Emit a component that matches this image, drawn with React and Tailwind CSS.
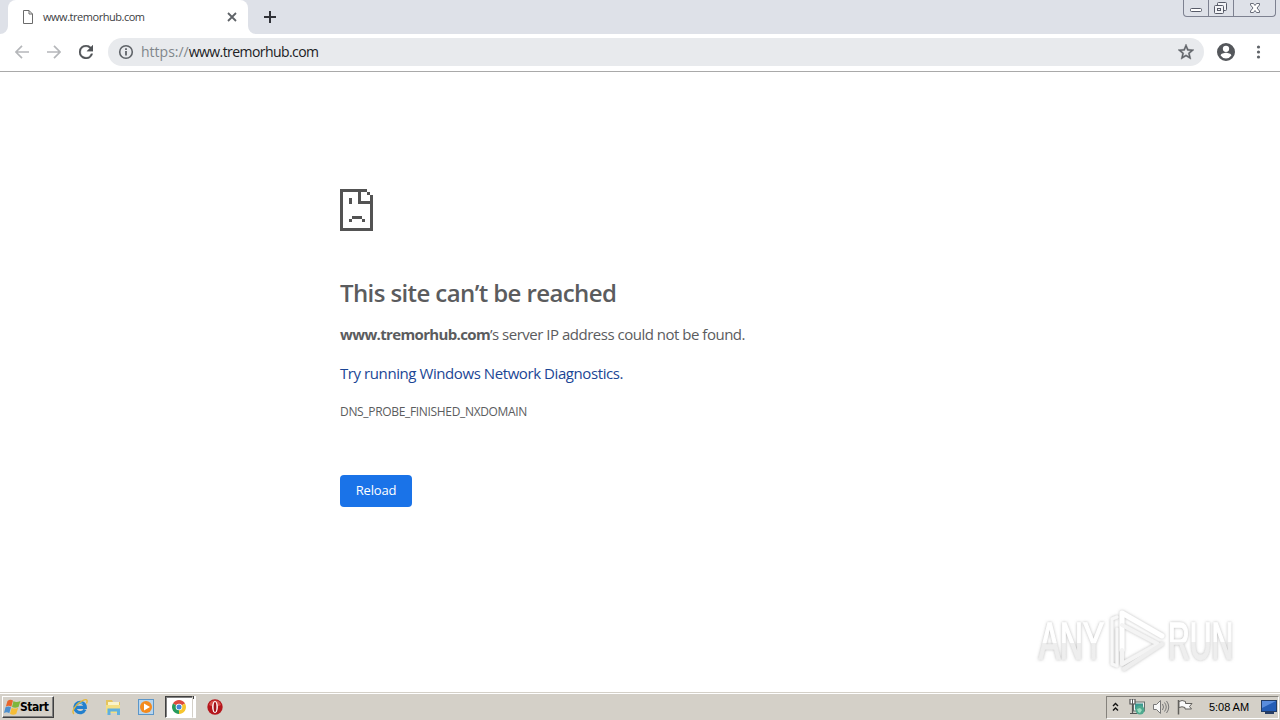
import React from 'react';

const TabStrip = () => (
  <div className="flex justify-between h-[34px] bg-[#dee1e8]">
    <div className="flex">
      <svg width="8" height="34" viewBox="0 0 8 34">
        <path d="M0 34a8 8 0 0 0 8-8v8z" fill="#fff" />
      </svg>
      <div className="flex items-center w-[240px] h-[34px] pl-[14px] pr-[10px] bg-white rounded-t-lg">
        <svg className="mr-[9px]" width="12" height="14" viewBox="0 0 12 14" fill="none" stroke="#6b6b6b">
          <path d="M1.500 .5h5.500l3.500 3.500v9.500h-9zM7 .5v3.500h3.500" />
        </svg>
        <span className="flex-grow text-[11px] leading-4 text-[#3c4043] tracking-[-0.47px]">www.tremorhub.com</span>
        <svg width="12" height="12" viewBox="0 0 12 12" stroke="#5f6368" strokeWidth="1.800">
          <path d="M2 2l8 8M10 2l-8 8" />
        </svg>
      </div>
      <svg width="8" height="34" viewBox="0 0 8 34">
        <path d="M8 34a8 8 0 0 1-8-8v8z" fill="#fff" />
      </svg>
      <svg className="ml-2 mt-[11px]" width="12" height="12" viewBox="0 0 12 12" stroke="#303238" strokeWidth="2">
        <path d="M6 0v12M0 6h12" />
      </svg>
    </div>
    <div className="flex mr-1 h-[17px] border border-t-0 border-[#7d8190] rounded-b">
      <div className="flex justify-center w-[25px] border-r border-[#7d8190]">
        <svg width="24" height="16" viewBox="0 0 24 16">
          <rect x="6.500" y="8.500" width="11" height="3" rx="1" fill="#fff" stroke="#575b68" />
        </svg>
      </div>
      <div className="flex justify-center w-[25px] border-r border-[#7d8190]">
        <svg width="24" height="16" viewBox="0 0 24 16" fill="#f3f4f7" stroke="#575b68">
          <rect x="8.500" y="2.500" width="9" height="8" rx="1" />
          <rect x="5.500" y="5.500" width="9" height="8" rx="1" />
          <rect x="8.500" y="8.500" width="3" height="2" />
        </svg>
      </div>
      <div className="flex justify-center w-[41px]">
        <svg width="40" height="16" viewBox="0 0 40 16">
          <path
            d="M15.500 3.500h3l1.500 2 1.500-2h3v1.500l-2.500 3 2.500 3v1.500h-3l-1.500-2-1.500 2h-3v-1.500l2.500-3-2.500-3z"
            fill="#fff"
            stroke="#686c79"
          />
        </svg>
      </div>
    </div>
  </div>
);

const Toolbar = () => (
  <div className="flex items-center h-[38px] pl-[15px] pr-[14px] pb-px bg-white border-b border-[#a9a9a9]">
    <svg width="14" height="14" viewBox="0 0 14 14" fill="none" stroke="#b5b7ba" strokeWidth="1.700">
      <path d="M14 7H1M7 .8L.9 7 7 13.200" />
    </svg>
    <svg className="ml-[18px]" width="14" height="14" viewBox="0 0 14 14" fill="none" stroke="#b5b7ba" strokeWidth="1.700">
      <path d="M0 7h13M7 .8L13.100 7 7 13.200" />
    </svg>
    <svg className="ml-[18px]" width="14" height="14" viewBox="4 4 16 16" fill="#505357" stroke="#505357" strokeWidth=".4">
      <path d="M17.650 6.350A7.960 7.960 0 0 0 12 4a8 8 0 1 0 7.730 10h-2.080A6 6 0 1 1 12 6c1.660 0 3.140.69 4.220 1.780L13 11h7V4z" />
    </svg>
    <div className="flex items-center flex-grow ml-[15px] h-7 pl-[10px] pr-[10px] bg-[#e8eaed] rounded-full">
      <svg width="16" height="16" viewBox="0 0 16 16" fill="none" stroke="#5f6368" strokeWidth="1.600">
        <circle cx="8" cy="8" r="6.300" />
        <path d="M8 7v4.500M8 4.200v1.700" strokeWidth="1.800" />
      </svg>
      <span className="flex-grow ml-[7px] text-[14px] leading-5 text-[#202124] tracking-[-0.57px]">
        <span className="text-[#80868b] tracking-[0px]">https://</span>www.tremorhub.com
      </span>
      <svg width="16" height="16" viewBox="2 2 20 20" fill="#5f6368" stroke="#5f6368" strokeWidth=".5">
        <path d="M22 9.240l-7.190-.62L12 2 9.190 8.630 2 9.240l5.460 4.730L5.820 21 12 17.270 18.180 21l-1.630-7.030zM12 15.400l-3.760 2.270 1-4.280-3.320-2.880 4.380-.38L12 6.100l1.710 4.040 4.380.38-3.320 2.880 1 4.280z" />
      </svg>
    </div>
    <svg className="ml-[13px]" width="18" height="18" viewBox="2 2 20 20" fill="#54575b">
      <path d="M12 2a10 10 0 1 0 0 20 10 10 0 0 0 0-20zm0 3a3.500 3.500 0 1 1 0 7 3.500 3.500 0 0 1 0-7zm0 14.200a7.200 7.200 0 0 1-6-3.220c.03-1.990 4-3.080 6-3.080s5.970 1.090 6 3.080a7.200 7.200 0 0 1-6 3.220z" />
    </svg>
    <svg className="ml-[15px]" width="16" height="16" viewBox="0 0 16 16" fill="#5f6368">
      <circle cx="8.500" cy="3" r="1.600" />
      <circle cx="8.500" cy="8" r="1.600" />
      <circle cx="8.500" cy="13" r="1.600" />
    </svg>
  </div>
);

const SadPage = () => (
  <svg width="33" height="42" viewBox="0 0 33 42" fill="#535353" shapeRendering="crispEdges">
    <path d="M0 0h27v3h3v3h3v36H0zM3 3v36h27V15H18V3zM21 3v9h9V6h-3V3z" fillRule="evenodd" />
    <path d="M27 3h3v3h-3zM9 9h3v6H9zM12 27h10v3H12zM9 30h3v3H9zM22 30h3v3h-3z" />
  </svg>
);

const Watermark = () => (
  <svg className="absolute right-[30px] bottom-[14px]" width="220" height="72" viewBox="1030 606 220 72">
    <defs>
      <linearGradient id="fade" x1="0" y1="0" x2="0" y2="1">
        <stop offset=".52" stopColor="#fff" />
        <stop offset=".52" stopColor="#eee" />
      </linearGradient>
      <filter id="shade" x="-10%" y="-10%" width="120%" height="120%">
        <feDropShadow dx="0" dy="0" stdDeviation="1.600" floodColor="#888" floodOpacity=".6" />
      </filter>
    </defs>
    <g filter="url(#shade)">
      <g fill="url(#fade)" stroke="url(#fade)" strokeWidth="1.500" fontFamily="Liberation Sans" fontSize="51">
        <text transform="translate(1039 659) scale(.62 1)">ANY</text>
        <text transform="translate(1168 659) scale(.59 1)">RUN</text>
      </g>
      <g fill="none" strokeWidth="5" strokeLinejoin="round" strokeLinecap="round">
        <path d="M1117 617l-5 2v45l5 2v-37" stroke="#f8f8f8" strokeWidth="3" />
        <path d="M1122 650v-37l40 23" stroke="#fff" />
        <path d="M1122 625l36 19-36 20v-14" stroke="#f4f4f4" strokeWidth="4" />
        <path d="M1162 644l-38 25" stroke="#eee" strokeWidth="4" />
      </g>
    </g>
  </svg>
);

const ErrorPage = () => (
  <div className="relative flex-grow pl-[340px] pt-[117px] bg-white text-[#5b5c5e]">
    <SadPage />
    <h1 className="mt-[46px] text-[24px] leading-8 font-semibold tracking-[-0.6px]">This site can’t be reached</h1>
    <p className="mt-[13px] text-[15px] leading-6 tracking-[-0.49px]">
      <strong className="font-bold tracking-[-0.65px]">www.tremorhub.com</strong>’s server IP address could not be found.
    </p>
    <p className="mt-[15px] text-[15px] leading-6 text-[#1b4695] tracking-[-0.42px]">Try running Windows Network Diagnostics.</p>
    <p className="mt-[17px] text-[12px] leading-5 tracking-[-0.33px]">DNS_PROBE_FINISHED_NXDOMAIN</p>
    <button className="mt-[53px] w-[72px] h-8 bg-[#1a73e8] text-white text-[13px] rounded tracking-[-.2px]">Reload</button>
    <Watermark />
  </div>
);

const StartFlag = () => (
  <svg width="17" height="16" viewBox="0 0 17 16">
    <path d="M3.500 2Q6 0 9 1.500L7.300 7.700Q4.500 6 1.800 7.700z" fill="#e8652b" />
    <path d="M9.500 2Q12 4 16.500 2L14.500 8Q11 9.500 8 8z" fill="#7eb63c" />
    <path d="M1.500 8.300Q4.500 6.800 7 8.300L5.300 14.300Q3 12.500 0 14z" fill="#4d8fce" />
    <path d="M7.700 8.700Q10.500 10.500 14.200 8.700L12.200 15Q9 16.500 6 14.800z" fill="#f6bd36" />
  </svg>
);

const ExplorerIcon = () => (
  <svg width="16" height="16" viewBox="0 0 16 16" fill="none">
    <path d="M12.900 10.500A5.200 5.200 0 1 1 13.300 8.300H4.500" stroke="#2380cd" strokeWidth="3.200" />
    <path d="M6 4.500Q8 3 10.500 4.500" stroke="#73c6ef" strokeWidth="1.200" />
    <path d="M2 14.800C-1 13 3 6 9 2.500S16 1 14.500 4.500" stroke="#e4b83b" strokeWidth="1.400" />
  </svg>
);

const FolderIcon = () => (
  <svg width="16" height="16" viewBox="0 0 16 16">
    <path d="M1 1h6l1 2h7v11H1z" fill="#e5c45e" />
    <path d="M3 3h11v5H3z" fill="#f9f4c9" />
    <path d="M1 6h14v8H1z" fill="#f3df83" />
    <path d="M2.500 16V9.500h12.500V16h-3v-3.500H5.500V16z" fill="#5fb0df" />
  </svg>
);

const MediaIcon = () => (
  <svg width="16" height="16" viewBox="0 0 16 16">
    <rect x=".5" y=".5" width="15" height="15" fill="#b8d5ed" stroke="#5b96c9" />
    <circle cx="8" cy="8" r="6" fill="#f48a1d" />
    <path d="M6 4.500l6 3.500-6 3.500z" fill="#fff" />
  </svg>
);

const ChromeIcon = () => (
  <svg width="14" height="14" viewBox="0 0 14 14">
    <path d="M7 7L.94 3.500a7 7 0 0 1 12.120 0z" fill="#dc4b3e" />
    <path d="M7 7l6.060-3.500A7 7 0 0 1 7 14z" fill="#f6c52e" />
    <path d="M7 7v7A7 7 0 0 1 .94 3.500z" fill="#279b5c" />
    <circle cx="7" cy="7" r="3.300" fill="#fff" />
    <circle cx="7" cy="7" r="2.500" fill="#4285d8" />
  </svg>
);

const OperaIcon = () => (
  <svg width="16" height="16" viewBox="0 0 16 16">
    <circle cx="8" cy="8" r="7.700" fill="#b5161c" />
    <path d="M2 6a6.300 6.300 0 0 1 12 0q-6 3-12 0z" fill="#d9514c" />
    <ellipse cx="8" cy="8" rx="2.900" ry="5.900" fill="#fff" />
    <ellipse cx="8" cy="8" rx="1.400" ry="5" fill="#a3131a" />
  </svg>
);

const Tray = () => (
  <div className="flex items-center w-[173px] h-[23px] mr-px pl-[5px] border border-t-[#85827c] border-l-[#85827c] border-b-white border-r-white">
    <svg width="7" height="10" viewBox="0 0 7 10" fill="none" stroke="#111" strokeWidth="1.400">
      <path d="M1 4l2.500-2.500L6 4M1 8.500L3.500 6 6 8.500" />
    </svg>
    <svg className="ml-[10px]" width="16" height="16" viewBox="0 0 16 16">
      <rect x="4.500" y="3" width="11" height="9" fill="#eee" stroke="#65706c" />
      <rect x="6" y="4.500" width="8" height="6" fill="#3c9a91" />
      <path d="M1 0h5v5H1zM3.500 4v11M1 14.500h7" fill="#fff" stroke="#555" strokeWidth="1.200" />
      <path d="M3.500 0v4" stroke="#555" />
      <circle cx="11" cy="11" r="4.500" fill="#4fa98f" />
      <path d="M8 10l3-1 2 2-2 3-2-1z" fill="#9cddc0" />
    </svg>
    <svg className="ml-2" width="17" height="16" viewBox="0 0 17 16" fill="none" stroke="#777">
      <path d="M.5 5.500h3l4-4v13l-4-4h-3z" fill="#f7f7f7" />
      <path d="M9.500 5q2 3 0 6M11.500 3.500q3.500 4.500 0 9M13.500 2q4.500 6 0 12" />
    </svg>
    <svg className="ml-[7px]" width="17" height="16" viewBox="0 0 17 16" fill="#fafafa" stroke="#62605c">
      <path d="M1.500 1v14.500" strokeWidth="1.500" />
      <path d="M2 2.500q3-2 6.500 0v2h6.500l-2.500 3 2 2.500H8V8.500q-3-1.500-6 0z" />
    </svg>
    <span className="ml-[15px] whitespace-nowrap font-['Liberation_Sans'] text-[11px] text-black tracking-[-.05px]">5:08 AM</span>
    <svg className="ml-auto mr-px" width="16" height="14" viewBox="0 0 16 14">
      <rect x=".5" y=".5" width="15" height="11" fill="#245db6" stroke="#223c65" />
      <path d="M1 1h14L1 8z" fill="#598dde" />
      <path d="M4 13h9" stroke="#263d65" strokeWidth="2" />
    </svg>
  </div>
);

const Taskbar = () => (
  <div className="h-7 border-t border-[#d4d0c8] bg-[#d4d0c8]">
    <div className="flex items-center h-[27px] border-t border-white">
      <button className="flex items-center ml-[2px] w-[52px] h-[22px] pl-px bg-[#d4d0c8] border border-t-white border-l-white border-b-[#404040] border-r-[#404040] shadow-[inset_-1px_-1px_0_#808080]">
        <StartFlag />
        <span className="-ml-px font-['DejaVu_Sans_Condensed','DejaVu_Sans'] text-[12px] font-bold text-black tracking-[-.45px]">Start</span>
      </button>
      <div className="flex items-center ml-[18px] gap-[17px]">
        <ExplorerIcon />
        <FolderIcon />
        <MediaIcon />
      </div>
      <div className="flex items-center justify-center ml-[11px] w-7 h-[22px] bg-white border border-t-[#404040] border-l-[#404040] border-b-white border-r-[#d4d0c8] shadow-[inset_1px_1px_0_#808080]">
        <ChromeIcon />
      </div>
      <div className="flex w-[3px] h-[22px] mr-[11px] bg-white">
        <div className="w-px h-[3px] bg-[#404040]" />
      </div>
      <OperaIcon />
      <div className="flex-grow" />
      <Tray />
    </div>
  </div>
);

const App = () => {
  return (
    <div className="flex flex-col w-[1280px] h-[720px] overflow-hidden bg-white font-['Open_Sans',sans-serif]">
      <TabStrip />
      <Toolbar />
      <ErrorPage />
      <Taskbar />
    </div>
  );
};

export default App;
